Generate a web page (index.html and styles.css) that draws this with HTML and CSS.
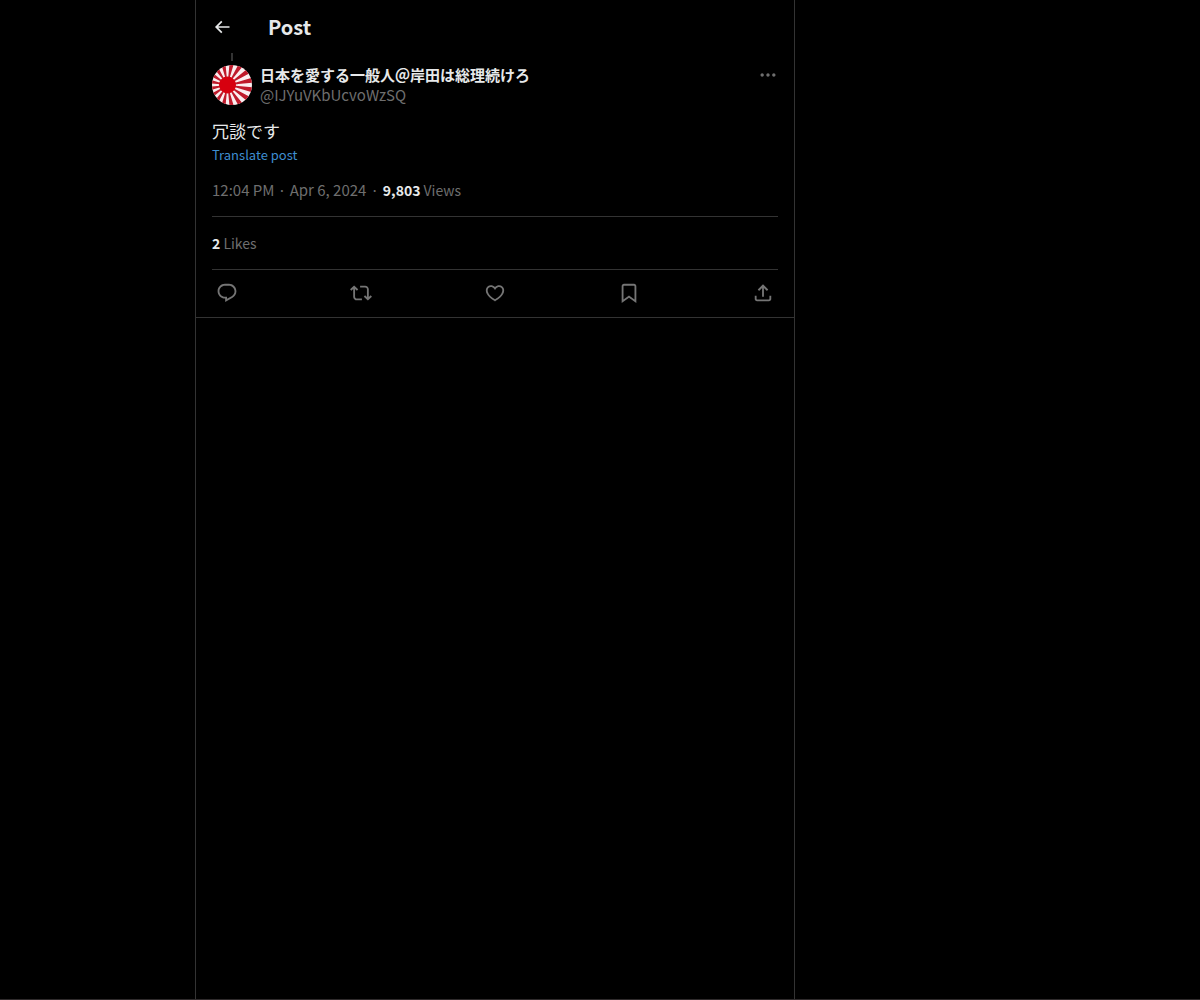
FILE: index.html
```html
<!DOCTYPE html>
<html lang="en">
<head>
    <meta charset="UTF-8">
    <meta name="viewport" content="width=device-width, initial-scale=1.0">
    <title>Post</title>
    <link rel="stylesheet" href="styles.css">
</head>
<body>
    <main class="timeline">
        <header class="top-bar">
            <button class="icon-button" type="button" aria-label="Back">
                <svg class="icon-back" viewBox="0 0 24 24"><path d="M7.414 13l5.043 5.04-1.414 1.42L3.586 12l7.457-7.46 1.414 1.42L7.414 11H21v2H7.414z"/></svg>
            </button>
            <h1>Post</h1>
        </header>

        <article class="post">
            <div class="thread-line"></div>
            <div class="author">
                <svg class="avatar" viewBox="0 0 40 40" role="img" aria-label="Profile picture">
                    <defs>
                        <clipPath id="round"><circle cx="20" cy="20" r="20"/></clipPath>
                    </defs>
                    <g clip-path="url(#round)">
                        <rect width="40" height="40" fill="#fbeef0"/>
                        <!-- 16 rays: dash and gap are both 1/32 of the ring -->
                        <circle cx="15.5" cy="20" r="16" pathLength="32" fill="none" stroke="#bf1a2b" stroke-width="32" stroke-dasharray="1 1" stroke-dashoffset="-0.5"/>
                        <circle cx="15.5" cy="20" r="8.5" fill="#d7000f"/>
                    </g>
                </svg>
                <div class="author-names">
                    <a class="display-name" href="#">日本を愛する一般人＠岸田は総理続けろ</a>
                    <a class="handle" href="#">@IJYuVKbUcvoWzSQ</a>
                </div>
                <button class="icon-button" type="button" aria-label="More">
                    <svg class="icon-more" viewBox="0 0 24 24"><path d="M3 12c0-1.1.9-2 2-2s2 .9 2 2-.9 2-2 2-2-.9-2-2zm9 2c1.1 0 2-.9 2-2s-.9-2-2-2-2 .9-2 2 .9 2 2 2zm7 0c1.1 0 2-.9 2-2s-.9-2-2-2-2 .9-2 2 .9 2 2 2z"/></svg>
                </button>
            </div>

            <p class="post-text" lang="ja">冗談です</p>
            <button class="translate" type="button">Translate post</button>

            <div class="meta">
                <a href="#">12:04 PM · Apr 6, 2024</a>
                <span>·</span>
                <span class="views"><strong>9,803</strong> Views</span>
            </div>

            <div class="stats">
                <a href="#"><strong>2</strong> Likes</a>
            </div>

            <div class="actions">
                <button class="icon-button" type="button" aria-label="Reply">
                    <svg viewBox="0 0 24 24"><path d="M1.751 10c0-4.42 3.584-8 8.005-8h4.366c4.49 0 8.129 3.64 8.129 8.13 0 2.96-1.607 5.68-4.196 7.11l-8.054 4.46v-3.69h-.067c-4.49.1-8.183-3.51-8.183-8.01zm8.005-6c-3.317 0-6.005 2.69-6.005 6 0 3.37 2.77 6.08 6.138 6.01l.351-.01h1.761v2.3l5.087-2.81c1.951-1.08 3.163-3.13 3.163-5.36 0-3.39-2.744-6.13-6.129-6.13H9.756z"/></svg>
                </button>
                <button class="icon-button" type="button" aria-label="Repost">
                    <svg viewBox="0 0 24 24"><path d="M4.5 3.88l4.432 4.14-1.364 1.46L5.5 7.55V16c0 1.1.896 2 2 2H13v2H7.5c-2.209 0-4-1.79-4-4V7.55L1.432 9.48.068 8.02 4.5 3.88zM16.5 6H11V4h5.5c2.209 0 4 1.79 4 4v8.45l2.068-1.93 1.364 1.46-4.432 4.14-4.432-4.14 1.364-1.46 2.068 1.93V8c0-1.1-.896-2-2-2z"/></svg>
                </button>
                <button class="icon-button" type="button" aria-label="Like">
                    <svg viewBox="0 0 24 24"><path d="M16.697 5.5c-1.222-.06-2.679.51-3.89 2.16l-.805 1.09-.806-1.09C9.984 6.01 8.526 5.44 7.304 5.5c-1.243.07-2.349.78-2.91 1.91-.552 1.12-.633 2.78.479 4.82 1.074 1.97 3.257 4.27 7.129 6.61 3.87-2.34 6.052-4.64 7.126-6.61 1.111-2.04 1.03-3.7.477-4.82-.561-1.13-1.666-1.84-2.908-1.91zm4.187 7.69c-1.351 2.48-4.001 5.12-8.379 7.67l-.503.3-.504-.3c-4.379-2.55-7.029-5.19-8.382-7.67-1.36-2.5-1.41-4.86-.514-6.67.887-1.79 2.647-2.91 4.601-3.01 1.651-.09 3.368.56 4.798 2.01 1.429-1.45 3.146-2.1 4.796-2.01 1.954.1 3.714 1.22 4.601 3.01.896 1.81.846 4.17-.514 6.67z"/></svg>
                </button>
                <button class="icon-button" type="button" aria-label="Bookmark">
                    <svg viewBox="0 0 24 24"><path d="M4 4.5C4 3.12 5.119 2 6.5 2h11C18.881 2 20 3.12 20 4.5v18.44l-8-5.71-8 5.71V4.5zM6.5 4c-.276 0-.5.22-.5.5v14.56l6-4.29 6 4.29V4.5c0-.28-.224-.5-.5-.5h-11z"/></svg>
                </button>
                <button class="icon-button" type="button" aria-label="Share">
                    <svg viewBox="0 0 24 24"><path d="M12 2.59l5.7 5.7-1.41 1.42L13 6.41V16h-2V6.41l-3.3 3.3-1.41-1.42L12 2.59zM21 15l-.02 3.51c0 1.38-1.12 2.49-2.5 2.49H5.5C4.11 21 3 19.88 3 18.5V15h2v3.5c0 .28.22.5.5.5h12.98c.28 0 .5-.22.5-.5L19 15h2z"/></svg>
                </button>
            </div>
        </article>
    </main>
</body>
</html>
```
FILE: styles.css
```css
* {
    box-sizing: border-box;
}
body {
    display: grid;
    grid-template-columns: 195px minmax(0, 600px) 1fr;
    min-height: 100vh;
    margin: 0;
    border-bottom: 1px solid #2f2b2c;
    background-color: #000;
    color: #6e6e6e;
    font-family: 'Noto Sans CJK JP', sans-serif;
    font-size: 15px;
    line-height: 20px;
}
a {
    color: inherit;
    text-decoration: none;
}
a:hover {
    text-decoration: underline;
}
strong {
    color: #e7e9ea;
    font-weight: 700;
}
button {
    padding: 0;
    border: 0;
    background: none;
    color: inherit;
    font: inherit;
    cursor: pointer;
}
.timeline {
    grid-column: 2;
    border-left: 1px solid #333;
    border-right: 1px solid #333;
}
.top-bar {
    display: flex;
    align-items: center;
    gap: 36px;
    height: 53px;
    padding: 0 16px;
    color: #e7e9ea;
}
h1 {
    margin: 0;
    font-size: 20px;
    line-height: 24px;
}
.icon-button {
    display: flex;
    align-items: center;
    justify-content: center;
}
.icon-button svg {
    width: 22px;
    height: 22px;
    fill: currentColor;
}
.icon-button .icon-back,
.icon-button .icon-more {
    width: 20px;
    height: 20px;
}
.post {
    padding: 0 16px;
    border-bottom: 1px solid #333;
}
.thread-line {
    width: 2px;
    height: 8px;
    margin: 0 19px 4px;
    background-color: #333;
}
.author {
    display: flex;
    align-items: flex-start;
    gap: 8px;
}
.avatar {
    flex: none;
    width: 40px;
    height: 40px;
}
.author-names {
    display: flex;
    flex: 1;
    flex-direction: column;
    align-items: flex-start;
}
.display-name {
    color: #e7e9ea;
    font-weight: 700;
}
.post-text {
    margin: 14px 0 0;
    color: #e7e9ea;
    font-size: 17px;
    line-height: 24px;
}
.translate {
    display: block;
    color: #3e8ed0;
    font-size: 13px;
    line-height: 24px;
}
.meta {
    display: flex;
    gap: 4px;
    padding: 13px 0 16px;
    border-bottom: 1px solid #333;
}
.views {
    font-size: 14px;
}
.stats {
    padding: 16px 0;
    border-bottom: 1px solid #333;
    font-size: 14px;
}
.actions {
    display: flex;
    align-items: center;
    justify-content: space-between;
    padding: 8px 0 9px;
    color: #757575;
}
.actions .icon-button {
    width: 30px;
    height: 30px;
}
```
